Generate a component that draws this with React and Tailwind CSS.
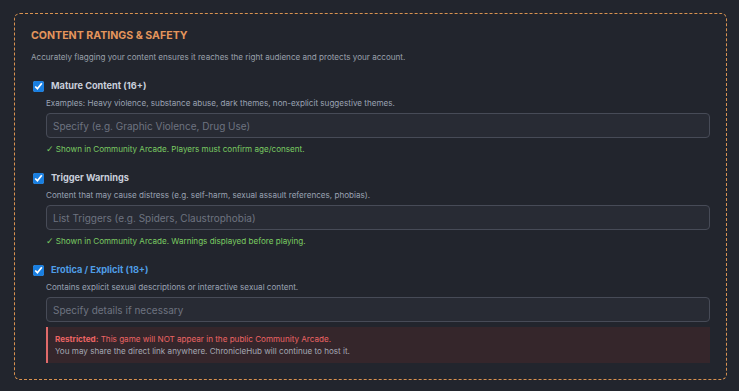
import React from 'react';

const items = [
  {
    label: 'Mature Content (16+)',
    labelColor: 'text-[#c9cfdb]',
    desc: 'Examples: Heavy violence, substance abuse, dark themes, non-explicit suggestive themes.',
    placeholder: 'Specify (e.g. Graphic Violence, Drug Use)',
    note: 'Shown in Community Arcade. Players must confirm age/consent.',
  },
  {
    label: 'Trigger Warnings',
    labelColor: 'text-[#c9cfdb]',
    desc: 'Content that may cause distress (e.g. self-harm, sexual assault references, phobias).',
    placeholder: 'List Triggers (e.g. Spiders, Claustrophobia)',
    note: 'Shown in Community Arcade. Warnings displayed before playing.',
  },
  {
    label: 'Erotica / Explicit (18+)',
    labelColor: 'text-[#4f9ee6]',
    desc: 'Contains explicit sexual descriptions or interactive sexual content.',
    placeholder: 'Specify details if necessary',
    restricted: true,
  },
];

const RatingItem = ({ item }) => (
  <div className="flex flex-col">
    <label className="flex items-center h-[14px] pl-[2px]">
      <input
        type="checkbox"
        defaultChecked
        className="m-0 w-[11px] h-[11px] accent-[#1a7fe0]"
      />
      <span className={`ml-[7px] text-[9.2px] leading-[14px] font-bold ${item.labelColor}`}>{item.label}</span>
    </label>
    <div className="pl-[15px]">
      <p className="mt-[4px] text-[8.1px] leading-[12px] text-[#9aa2b2]">{item.desc}</p>
      <input
        type="text"
        placeholder={item.placeholder}
        className="mt-[4px] w-full h-[25px] px-[6px] rounded-[4px] border border-[#474b57] bg-[#282b34] text-[10px] text-[#c9cfdb] placeholder:text-[#6e7380] outline-none"
      />
      {item.note && (
        <p className="mt-[5px] text-[8.1px] leading-[12px] text-[#7acb62]">
          <span className="text-[9px] font-['DejaVu_Sans',sans-serif]">✓</span> {item.note}
        </p>
      )}
      {item.restricted && (
        <div className="mt-[5px] border-l-2 border-[#e06a6a] bg-[#35262b] py-[6px] pl-[7px] text-[8.1px] leading-[12px]">
          <p className="text-[#ec6464]">
            <span className="font-bold">Restricted:</span> This game will NOT appear in the public Community Arcade.
          </p>
          <p className="text-[#a3a7b2]">You may share the direct link anywhere. ChronicleHub will continue to host it.</p>
        </div>
      )}
    </div>
  </div>
);

export default function App() {
  return (
    <div className="w-[739px] h-[391px] bg-[#22252d] pt-[13px] pl-[14px] pr-[12px] font-['Inter',sans-serif]">
      <div className="border border-dashed border-[#d99250] rounded-[6px] px-[16px] pt-[16px] pb-[16px]">
        <h2 className="text-[10.6px] leading-[12px] font-bold uppercase text-[#e4955c]">Content Ratings &amp; Safety</h2>
        <p className="mt-[9px] text-[8.1px] leading-[12px] text-[#9aa0ab]">
          Accurately flagging your content ensures it reaches the right audience and protects your account.
        </p>
        <div className="mt-[16px] flex flex-col gap-[16px]">
          {items.map((item, i) => (
            <RatingItem key={i} item={item} />
          ))}
        </div>
      </div>
    </div>
  );
}
